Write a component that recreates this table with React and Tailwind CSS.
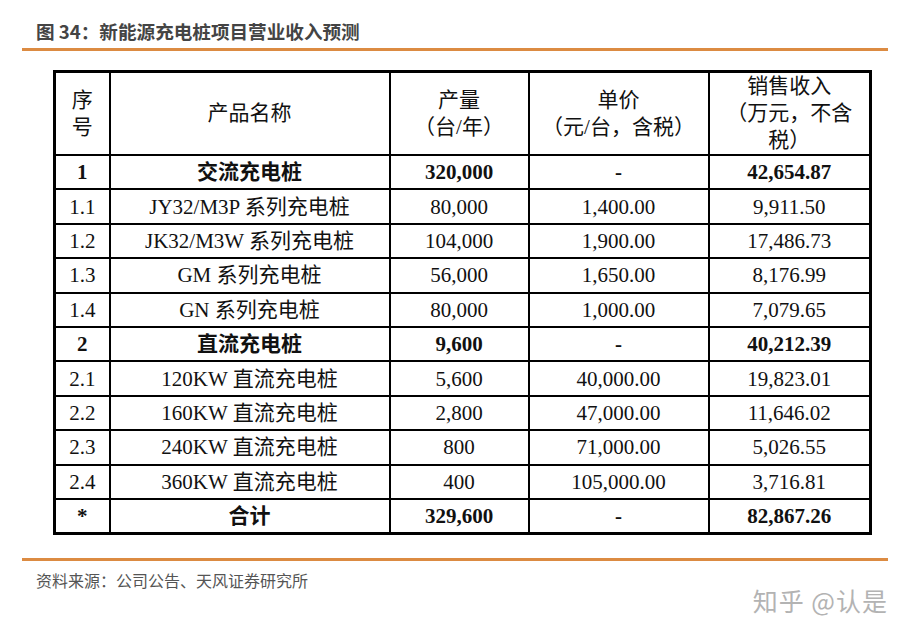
const rows = [
    { no: "1", name: "交流充电桩", qty: "320,000", price: "-", sales: "42,654.87", bold: true },
    { no: "1.1", name: "JY32/M3P 系列充电桩", qty: "80,000", price: "1,400.00", sales: "9,911.50" },
    { no: "1.2", name: "JK32/M3W 系列充电桩", qty: "104,000", price: "1,900.00", sales: "17,486.73" },
    { no: "1.3", name: "GM 系列充电桩", qty: "56,000", price: "1,650.00", sales: "8,176.99" },
    { no: "1.4", name: "GN 系列充电桩", qty: "80,000", price: "1,000.00", sales: "7,079.65" },
    { no: "2", name: "直流充电桩", qty: "9,600", price: "-", sales: "40,212.39", bold: true },
    { no: "2.1", name: "120KW 直流充电桩", qty: "5,600", price: "40,000.00", sales: "19,823.01" },
    { no: "2.2", name: "160KW 直流充电桩", qty: "2,800", price: "47,000.00", sales: "11,646.02" },
    { no: "2.3", name: "240KW 直流充电桩", qty: "800", price: "71,000.00", sales: "5,026.55" },
    { no: "2.4", name: "360KW 直流充电桩", qty: "400", price: "105,000.00", sales: "3,716.81" },
    { no: "*", name: "合计", qty: "329,600", price: "-", sales: "82,867.26", bold: true },
];

const cell = "border-2 border-black text-center align-middle p-0";

export default function App() {
    return (
        <div className="w-[910px] h-[636px] bg-white overflow-hidden font-['Noto_Sans_CJK_SC',sans-serif]">
            <h1 className="pl-[36px] pt-[19px] text-[18.6px] leading-[24px] font-bold text-[#444]">
                图 34：新能源充电桩项目营业收入预测
            </h1>
            <div className="mx-[22px] mt-[5px] h-[3px] bg-[#dc8b42]" />

            <table className="ml-[53px] mt-[19px] w-[816px] border-collapse border-[3px] border-black table-fixed text-[21px] text-[#111] font-['Liberation_Serif','Noto_Sans_CJK_SC',serif]">
                <colgroup>
                    <col className="w-[55px]" />
                    <col className="w-[280px]" />
                    <col className="w-[139px]" />
                    <col className="w-[180px]" />
                    <col className="w-[162px]" />
                </colgroup>
                <thead>
                    <tr className="h-[83px] leading-[27px]">
                        <th className={`${cell} font-normal`}>
                            序<br />号
                        </th>
                        <th className={`${cell} font-normal`}>产品名称</th>
                        <th className={`${cell} font-normal`}>
                            产量<br />（台/年）
                        </th>
                        <th className={`${cell} font-normal`}>
                            单价<br />（元/台，含税）
                        </th>
                        <th className={`${cell} font-normal`}>
                            销售收入<br />（万元，不含<br />税）
                        </th>
                    </tr>
                </thead>
                <tbody>
                    {rows.map((r) => (
                        <tr
                            key={r.no}
                            className={`h-[34.4px] leading-[24px] ${r.bold ? "font-bold" : ""}`}
                        >
                            <td className={cell}>{r.no}</td>
                            <td className={cell}>{r.name}</td>
                            <td className={cell}>{r.qty}</td>
                            <td className={cell}>{r.price}</td>
                            <td className={cell}>{r.sales}</td>
                        </tr>
                    ))}
                </tbody>
            </table>

            <div className="mx-[22px] mt-[23px] h-[3px] bg-[#dc8b42]" />
            <div className="flex justify-between items-start pl-[36px] pr-[22px]">
                <p className="mt-[8px] text-[16px] leading-[22px] text-[#555]">
                    资料来源：公司公告、天风证券研究所
                </p>
                <p className="mt-[24px] text-[25px] leading-[30px] text-[#b3b3b3] tracking-[1px]">
                    知乎 @认是
                </p>
            </div>
        </div>
    );
}
